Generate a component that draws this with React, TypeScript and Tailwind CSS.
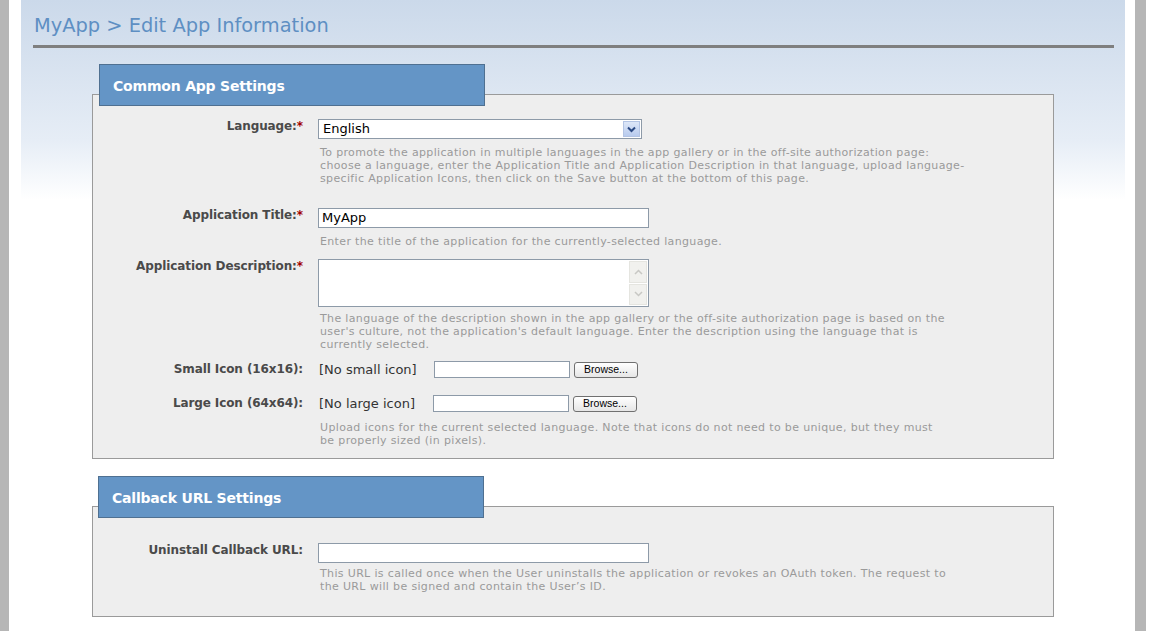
import React from "react";

const font = { fontFamily: '"DejaVu Sans", Verdana, sans-serif' };

function Label({ text, req }: { text: string; req?: boolean }) {
  return (
    <div className="w-[210px] shrink-0 text-right text-[12px] leading-[15px] font-bold text-[#4a4a4a] tracking-[-0.1px]">
      {text}
      {req ? <span className="text-[#a00000]">*</span> : null}
    </div>
  );
}

function Help({ children, mt, w = "w-[628px]" }: { children: React.ReactNode; mt: string; w?: string }) {
  return (
    <div className={`text-[11px] leading-[13px] text-[#9a9a9a] ${w} pl-[2px] tracking-[0.35px] ${mt}`}>{children}</div>
  );
}

function Tab({ title, ml }: { title: string; ml: string }) {
  return (
    <div
      className={`relative z-10 ${ml} w-[386px] h-[42px] bg-[#6495c6] border border-[#4f7091] flex items-center pl-[13px] pt-[2px] text-white font-bold text-[14px] tracking-[-0.2px]`}
    >
      {title}
    </div>
  );
}

function Browse() {
  return (
    <div className="ml-[4px] w-[64px] h-[16px] border border-[#707070] rounded-[3px] bg-[linear-gradient(to_bottom,#ffffff,#e6e6e6)] flex items-center justify-center text-[10.5px] text-black" style={{ fontFamily: '"Liberation Sans", Arial, sans-serif' }}>
      Browse...
    </div>
  );
}

export default function App() {
  return (
    <div className="flex w-[1153px] h-[631px] overflow-hidden bg-white" style={font}>
      <div className="w-[9px] shrink-0 bg-[#b6b6b6]" />
      <div className="w-[12px] shrink-0" />
      <div className="w-[1104px] shrink-0 bg-[linear-gradient(to_bottom,#cbd9ea_0px,#e6edf6_140px,#ffffff_200px)] pl-[12px] pr-[11px]">
        <div className="pt-[13px] text-[19.4px] leading-[26px] text-[#5e8fc3] pl-[1px]">MyApp &gt; Edit App Information</div>
        <div className="mt-[6px] h-[3px] bg-[#7f7f7f]" />

        <div className="ml-[59px] w-[962px]">
          {/* Section 1 */}
          <div className="mt-[16px]">
            <Tab title="Common App Settings" ml="ml-[7px]" />
            <div className="-mt-[12px] bg-[#eeeeee] border border-[#9a9a9a] pt-[24px] pb-[11px]">
              {/* Language */}
              <div className="flex">
                <Label text="Language:" req />
                <div className="ml-[15px]">
                  <div className="w-[324px] h-[20px] bg-white border border-[#8d9aa8] flex items-center justify-between pl-[4px] pr-[1px] text-[13px] text-black">
                    <span>English</span>
                    <div className="w-[17px] h-[16px] bg-[linear-gradient(to_bottom,#dde7f8,#b8cbee)] border border-[#b3c4e4] flex items-center justify-center">
                      <svg width="9" height="7" viewBox="0 0 9 7">
                        <path d="M1 1.5 L4.5 5 L8 1.5" stroke="#2b4a84" strokeWidth="2" fill="none" />
                      </svg>
                    </div>
                  </div>
                  <Help mt="mt-[7px]" w="w-[651px]">
                    To promote the application in multiple languages in the app gallery or in the off-site authorization page: choose a language, enter the Application Title and Application Description in that language, upload language-specific Application Icons, then click on the Save button at the bottom of this page.
                  </Help>
                </div>
              </div>

              {/* Title */}
              <div className="flex mt-[23px]">
                <Label text="Application Title:" req />
                <div className="ml-[15px]">
                  <div className="w-[331px] h-[20px] bg-white border border-[#8d9aa8] flex items-center pl-[3px] text-[13px] text-black">MyApp</div>
                  <Help mt="mt-[7px]">Enter the title of the application for the currently-selected language.</Help>
                </div>
              </div>

              {/* Description */}
              <div className="flex mt-[11px]">
                <Label text="Application Description:" req />
                <div className="ml-[15px]">
                  <div className="w-[331px] h-[48px] bg-white border border-[#8d9aa8] flex justify-end">
                    <div className="w-[19px] flex flex-col gap-[1px] py-[1px] pr-[1px]">
                      <div className="flex-1 bg-[#f1f1ee] border border-[#e5e5e0] flex items-center justify-center">
                        <svg width="9" height="6" viewBox="0 0 9 6"><path d="M1 5 L4.5 1.5 L8 5" stroke="#c8c8c4" strokeWidth="1.5" fill="none" /></svg>
                      </div>
                      <div className="flex-1 bg-[#f1f1ee] border border-[#e5e5e0] flex items-center justify-center">
                        <svg width="9" height="6" viewBox="0 0 9 6"><path d="M1 1 L4.5 4.5 L8 1" stroke="#c8c8c4" strokeWidth="1.5" fill="none" /></svg>
                      </div>
                    </div>
                  </div>
                  <Help mt="mt-[5px]">
                    The language of the description shown in the app gallery or the off-site authorization page is based on the user's culture, not the application's default language. Enter the description using the language that is currently selected.
                  </Help>
                </div>
              </div>

              {/* Small icon */}
              <div className="flex mt-[10px] items-center">
                <Label text="Small Icon (16x16):" />
                <div className="ml-[15px] flex items-center">
                  <span className="text-[13px] leading-[17px] text-[#333] w-[116px] pl-[1px]">[No small icon]</span>
                  <div className="w-[136px] h-[17px] bg-white border border-[#8d9aa8]" />
                  <Browse />
                </div>
              </div>

              {/* Large icon */}
              <div className="flex mt-[17px] items-center">
                <Label text="Large Icon (64x64):" />
                <div className="ml-[15px]">
                  <div className="flex items-center">
                    <span className="text-[13px] leading-[17px] text-[#333] w-[115px] pl-[1px]">[No large icon]</span>
                    <div className="w-[136px] h-[17px] bg-white border border-[#8d9aa8]" />
                    <Browse />
                  </div>
                </div>
              </div>
              <div className="flex">
                <div className="w-[210px] shrink-0" />
                <div className="ml-[15px]">
                  <Help mt="mt-[9px]">
                    Upload icons for the current selected language. Note that icons do not need to be unique, but they must be properly sized (in pixels).
                  </Help>
                </div>
              </div>
            </div>
          </div>

          {/* Section 2 */}
          <div className="mt-[17px]">
            <Tab title="Callback URL Settings" ml="ml-[6px]" />
            <div className="-mt-[12px] bg-[#eeeeee] border border-[#9a9a9a] pt-[36px] pb-[23px]">
              <div className="flex">
                <Label text="Uninstall Callback URL:" />
                <div className="ml-[15px]">
                  <div className="w-[331px] h-[20px] bg-white border border-[#8d9aa8]" />
                  <Help mt="mt-[4px]">
                    This URL is called once when the User uninstalls the application or revokes an OAuth token. The request to the URL will be signed and contain the User’s ID.
                  </Help>
                </div>
              </div>
            </div>
          </div>
        </div>
      </div>
      <div className="w-[10px] shrink-0" />
      <div className="w-[11px] shrink-0 bg-[#b6b6b6]" />
    </div>
  );
}
